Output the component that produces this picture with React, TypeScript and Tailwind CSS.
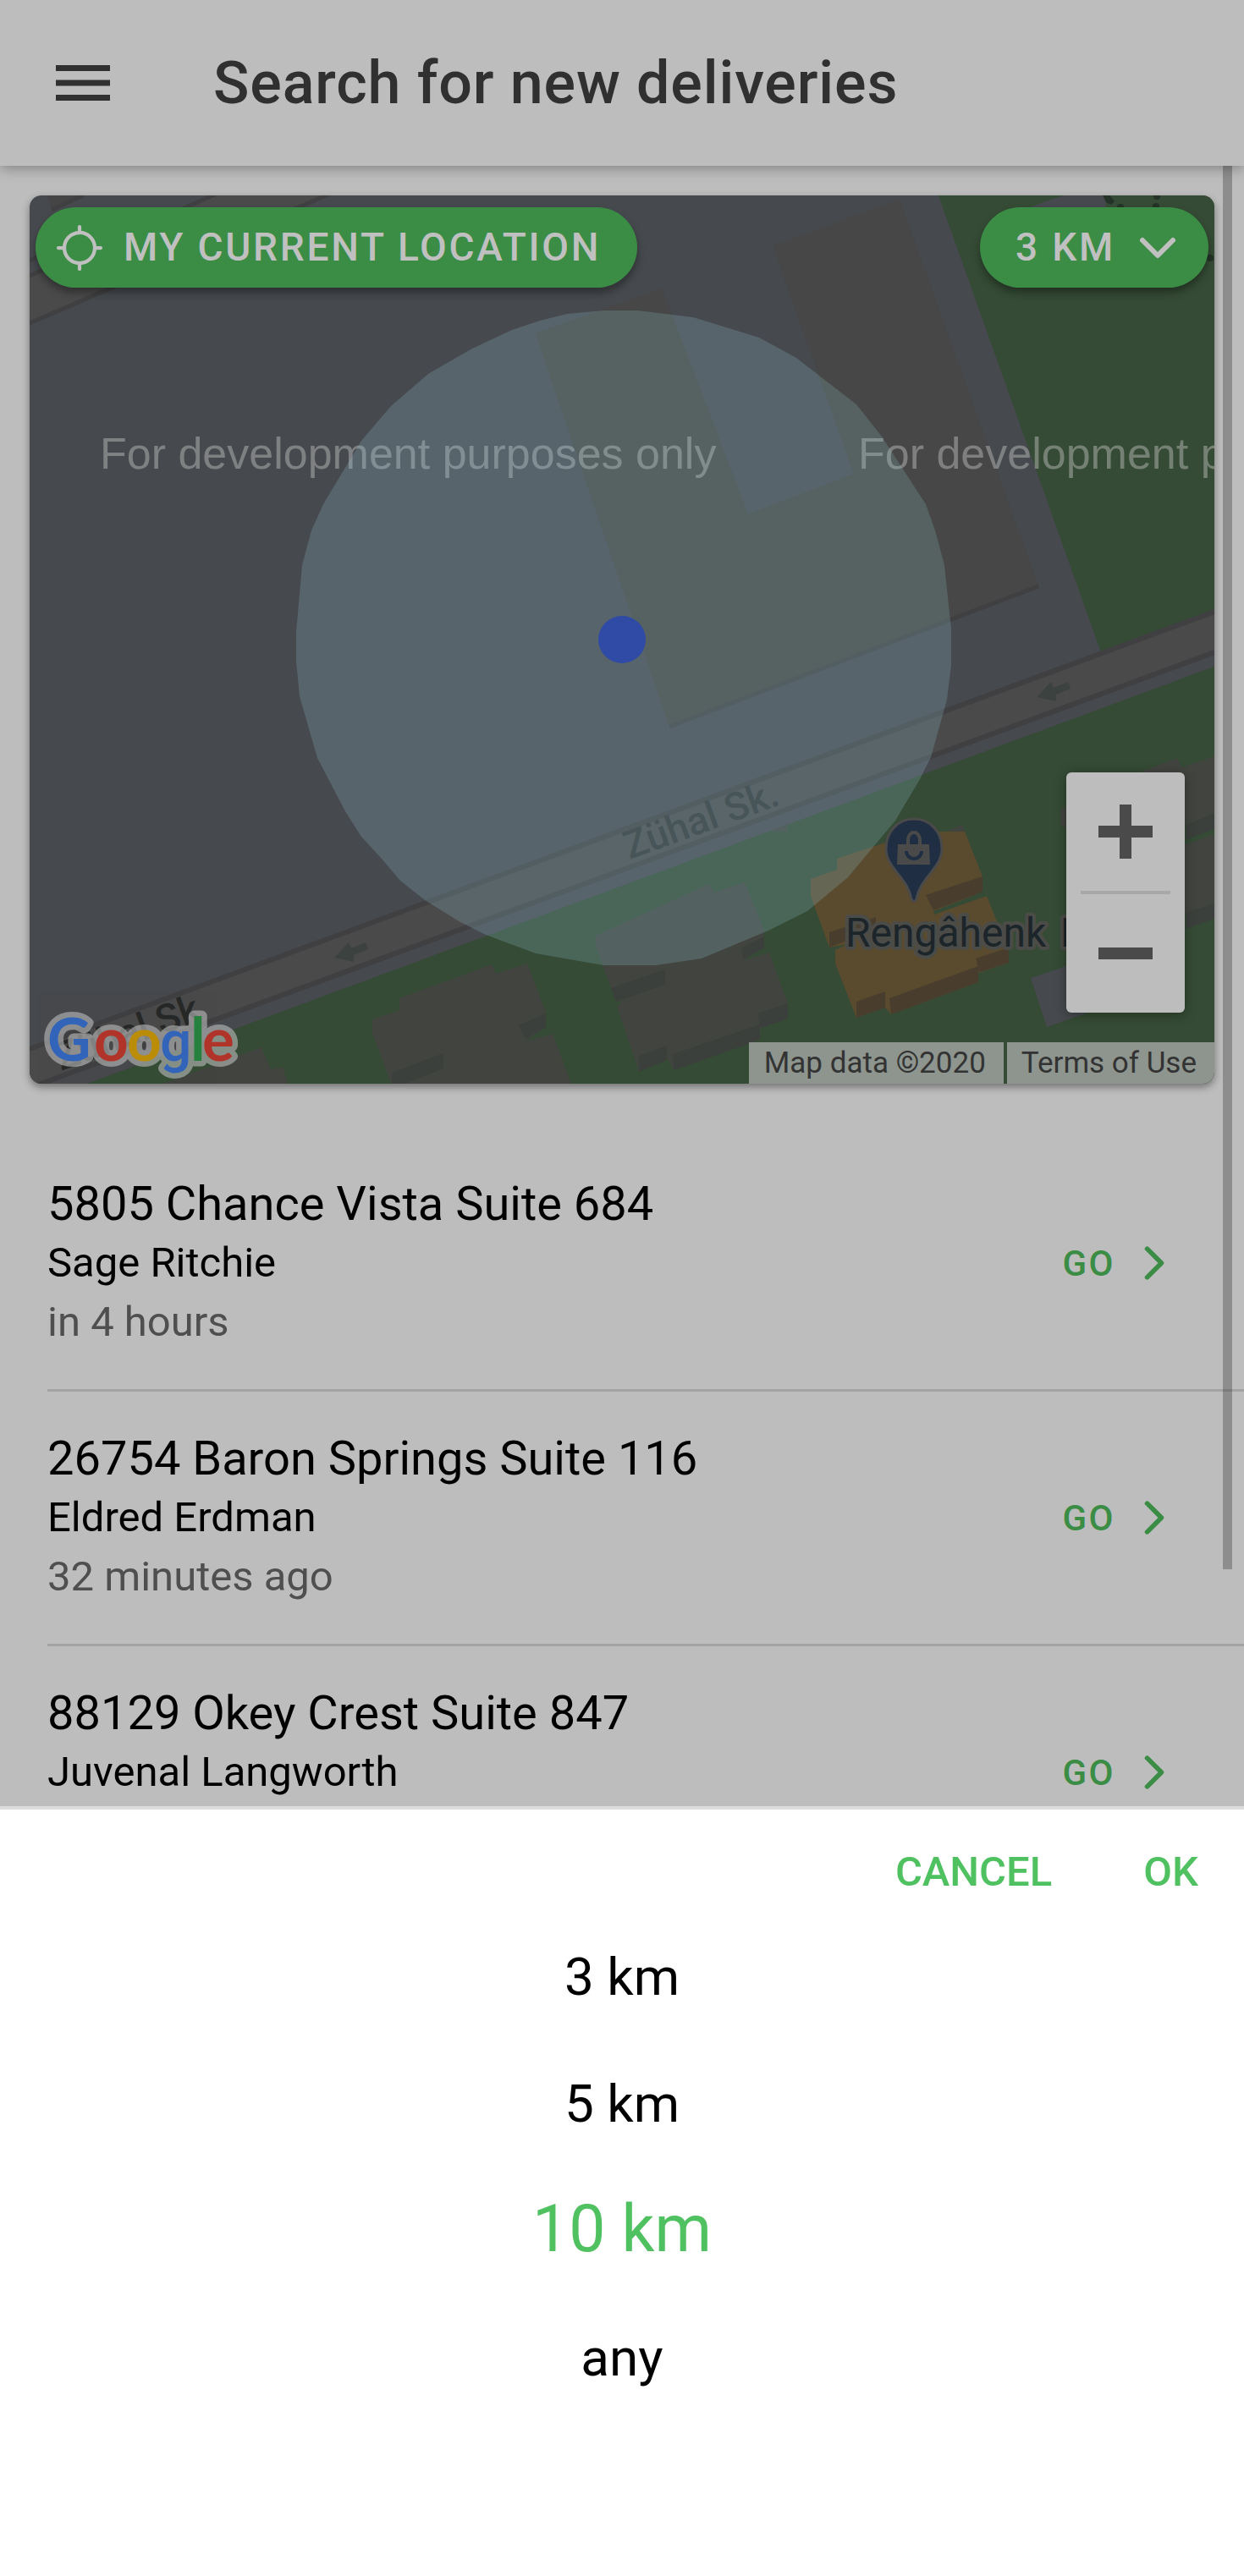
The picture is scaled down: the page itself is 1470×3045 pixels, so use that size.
import React from "react";

const deliveries = [
  { address: "5805 Chance Vista Suite 684", customer: "Sage Ritchie", time: "in 4 hours" },
  { address: "26754 Baron Springs Suite 116", customer: "Eldred Erdman", time: "32 minutes ago" },
  { address: "88129 Okey Crest Suite 847", customer: "Juvenal Langworth", time: "" },
];

const distances = ["3 km", "5 km", "10 km", "any"];

function MenuIcon() {
  return (
    <svg viewBox="0 0 64 42" className="h-[42px] w-16" fill="currentColor" aria-hidden="true">
      <path d="M0 0h64v7H0zM0 17.5h64v7H0zM0 35h64v7H0z" />
    </svg>
  );
}

function LocateIcon() {
  return (
    <svg viewBox="0 0 512 512" className="size-16 shrink-0" fill="none" stroke="currentColor" strokeWidth="34" strokeLinecap="round" strokeLinejoin="round" aria-hidden="true">
      <path d="M256 96V56M256 456v-40M256 112a144 144 0 10144 144 144 144 0 00-144-144zM416 256h40M56 256h40" />
    </svg>
  );
}

function ChevronDown() {
  return (
    <svg viewBox="0 0 512 512" className="size-16 shrink-0" fill="none" stroke="currentColor" strokeWidth="48" strokeLinecap="round" strokeLinejoin="round" aria-hidden="true">
      <path d="M112 184l144 144 144-144" />
    </svg>
  );
}

function ChevronForward() {
  return (
    <svg viewBox="0 0 512 512" className="size-[60px] shrink-0" fill="none" stroke="currentColor" strokeWidth="48" strokeLinecap="round" strokeLinejoin="round" aria-hidden="true">
      <path d="M184 112l144 144-144 144" />
    </svg>
  );
}

const arrow = "395,1132 412,1114 415,1121 432,1114 435,1122 418,1129 418,1137";

const largeBuilding = "M633 394L782 341L884 608L1009 560L913 291L1063 235L1227 692L791 859Z";

const radiusOutline =
  "754,367 819,375 897,399 941,423 1012,478 1042,516 1094,596 1105,627 1116,668 1124,743 1124,786 1119,827 1100,895 1087,921 1058,970 1002,1037 954,1077 908,1100 829,1133 775,1141 713,1141 633,1127 574,1105 544,1090 502,1064 473,1041 450,1014 427,989 408,959 375,896 354,823 350,782 350,747 357,668 368,627 382,596 427,521 462,480 506,442 558,412 605,390 638,379 670,371 713,367";

function LogoLetters({ halo = false }: { halo?: boolean }) {
  return (
    <text
      y="1254"
      fontFamily="Lato, Roboto, sans-serif"
      fontWeight="700"
      fontSize="71"
      stroke={halo ? "#bdbdbd" : "none"}
      strokeWidth="13"
      strokeLinejoin="round"
    >
      <tspan x="56" fill="#3264b9">G</tspan>
      <tspan x="111" fill="#b03429">o</tspan>
      <tspan x="150" fill="#bb8c05">o</tspan>
      <tspan x="189" fill="#3264b9" fontFamily="Roboto, sans-serif" fontWeight="500" fontSize="66">g</tspan>
      <tspan x="225" fill="#27813e">l</tspan>
      <tspan x="239" fill="#b03429">e</tspan>
    </text>
  );
}

function MapDrawing() {
  return (
    <svg viewBox="35 231 1400 1050" className="block h-full w-full" role="img" aria-label="Map of the search area">
      <clipPath id="search-radius">
        <polygon points={radiusOutline} />
      </clipPath>
      <rect x="35" y="231" width="1400" height="1050" fill="#46494d" />

      {/* north-west street and lots */}
      <path d="M56 231H98L61 248Z" fill="#464545" />
      <path d="M35 325L250 231H388L35 381Z" fill="#4a4a4a" />
      <path d="M35 326L256 229M35 382L390 229M61 248L98 231M35 308L60 297" stroke="#404042" strokeWidth="5" fill="none" />

      {/* large building */}
      <path d={largeBuilding} fill="#474747" />
      <path d={largeBuilding} fill="#45453f" clipPath="url(#search-radius)" />
      <path d="M791 859L1227 693" stroke="#404042" strokeWidth="5" />

      {/* parks */}
      <path d="M1109 231H1435V724L1301 771Z" fill="#354b35" />
      <path d="M1258 231H1305L1309 252H1205Q1225 240 1258 231Z" fill="#46494d" />
      <g fill="#243227">
        <path d="M1303 231h8l6 7-4 4-6-3z" />
        <circle cx="1324" cy="245" r="4" />
        <circle cx="1367" cy="232" r="4" />
        <circle cx="1366" cy="244" r="4" />
        <circle cx="1430" cy="305" r="4" />
      </g>
      <path d="M103 1281L1435 788V1281Z" fill="#354b35" />

      {/* main street */}
      <path d="M35 1239L1435 722V770L35 1285Z" fill="#4a4a4a" />
      <path d="M35 1240L1435 723M35 1286L1435 771" stroke="#404042" strokeWidth="6" />
      <polygon points={arrow} fill="#3c423f" />
      <polygon points={arrow} fill="#3c423f" transform="translate(830 -308)" />

      {/* grey buildings */}
      <g fill="#42453f">
        <path d="M581 1140L586 1151L623 1139L645 1196V1214L621 1231L653 1222L675 1281H462L440 1221V1205L472 1194V1180Z" />
        <path d="M192 1281L309 1238L320 1264L334 1261L340 1281Z" />
        <path d="M704 1106L838 1045L844 1055L880 1043L903 1100V1120L879 1135L909 1126L931 1186V1204L898 1216V1229L796 1265L789 1251L755 1267L729 1190L735 1184L727 1182L704 1118Z" />
        <path d="M1344 914L1391 896L1396 907L1435 894V961L1401 976L1300 1000L1253 975V957Z" />
        <path d="M1401 998L1435 986V1068L1401 1080L1350 1080V1010Z" />
        <path d="M1119 982L1137 975L1141 984Z" />
        <path d="M911 983L931 973V983Z" />
      </g>
      <g fill="#3b403d">
        <path d="M613 1212L645 1198V1214L621 1228Z" />
        <path d="M463 1268L524 1245V1263L478 1281H463Z" />
        <path d="M876 1121L903 1107V1120L879 1134Z" />
        <path d="M895 1198L931 1186V1204L899 1215Z" />
        <path d="M722 1168L786 1146V1164L728 1184Z" />
        <path d="M755 1248L788 1236V1253L755 1267Z" />
        <path d="M795 1246L898 1211V1229L796 1265Z" />
        <path d="M1401 976L1435 961V980L1401 993Z" />
        <path d="M1401 1079L1435 1068V1086L1401 1098Z" />
      </g>
      <path d="M1218 1156L1260 1142L1283 1198L1237 1214Z" fill="#46494d" />

      {/* shop building */}
      <path d="M958 1039L989 1028V1015L1046 996L1095 983H1140L1161 1036V1054L1103 1078L1166 1059L1192 1125V1138L1156 1150V1161L1053 1199L1046 1191L1012 1203L987 1139V1123L1002 1116L980 1120L958 1059Z" fill="#5a4b2f" />
      <path d="M1103 1077L1161 1055L1166 1059L1104 1081Z" fill="#354b35" />
      <g fill="#493e2e">
        <path d="M1094 1058L1161 1036V1054L1103 1076Z" />
        <path d="M980 1102L1035 1084V1098L980 1120Z" />
        <path d="M1012 1184L1046 1172V1191L1012 1203Z" />
        <path d="M1051 1180L1156 1142V1161L1053 1199Z" />
        <path d="M1153 1133L1192 1120V1138L1157 1149Z" />
      </g>

      <g fontFamily="'Liberation Sans', Arial, sans-serif" fontSize="52" fill="#bdbdbd" fillOpacity="0.48">
        <text x="118" y="554">For development purposes only</text>
        <text x="1014" y="554">For development purposes only</text>
      </g>
      <g fontFamily="Roboto, sans-serif" fontSize="46" fontWeight="500">
        <text transform="translate(744 1016) rotate(-20)" fill="#303535">Zühal Sk.</text>
        <text transform="translate(72 1266) rotate(-20)" fill="#272929">Zühal Sk</text>
      </g>

      {/* search radius */}
      <polygon fill="#8db8c8" fillOpacity="0.25" points={radiusOutline} />
      <circle cx="735" cy="756" r="28" fill="#2f4ba5" />

      {/* shop marker */}
      <path d="M1080 968C1060 968 1047 984 1047 1003C1047 1027 1073 1037 1077 1063Q1080 1068 1083 1063C1087 1037 1113 1027 1113 1003C1113 984 1100 968 1080 968Z" fill="#1f2e42" stroke="#4a4a4a" strokeWidth="3" />
      <path d="M1061 998H1098L1099 1022H1060Z" fill="#4a4a4a" />
      <path d="M1073 999V993A7 9 0 011087 993V999" fill="none" stroke="#4a4a4a" strokeWidth="4" />
      <path d="M1071 1006A9 9 0 001089 1006" fill="none" stroke="#1f2e42" strokeWidth="4" />
      <g fontFamily="Roboto, sans-serif" fontSize="48" fill="#1c252a" stroke="#4b4b48" strokeWidth="8" strokeLinejoin="round" paintOrder="stroke">
        <text x="999" y="1119">
          Rengâhenk<tspan x="1253">E</tspan>
        </text>
      </g>

      {/* map provider logo */}
      <g opacity="0.6">
        <LogoLetters halo />
      </g>
      <LogoLetters />
    </svg>
  );
}

function MapCard() {
  const pill =
    "absolute top-[14px] flex h-[95px] items-center rounded-full bg-[#3b8d46] text-[46px] font-medium tracking-[0.06em] text-[#c0c0c0] shadow-[0_6px_10px_rgba(0,0,0,0.35)]";
  return (
    <section className="relative m-[35px] aspect-[4/3] shrink-0 rounded-[14px] shadow-[0_4px_10px_rgba(0,0,0,0.4)]">
      <div className="h-full overflow-hidden rounded-[14px]">
        <MapDrawing />
      </div>
      <button type="button" className={`${pill} left-[7px] gap-5 pr-[43px] pl-5`}>
        <LocateIcon />
        MY CURRENT LOCATION
      </button>
      <button type="button" className={`${pill} right-[7px] gap-[18px] pr-7 pl-[42px]`}>
        3 KM
        <ChevronDown />
      </button>
      <div className="absolute right-[35px] bottom-[84px] flex w-[140px] flex-col rounded-md bg-[#bdbdbd] shadow-[0_2px_14px_rgba(0,0,0,0.35)]">
        <button type="button" aria-label="Zoom in" className="flex h-[140px] items-center justify-center">
          <svg viewBox="0 0 64 64" className="size-16" fill="#4a4a4a" aria-hidden="true">
            <path d="M25 0h14v25h25v14H39v25H25V39H0V25h25z" />
          </svg>
        </button>
        <div className="mx-[17px] h-1 bg-[#a8a8a8]" />
        <button type="button" aria-label="Zoom out" className="flex h-[140px] items-center justify-center">
          <svg viewBox="0 0 64 14" className="h-[14px] w-16" fill="#4a4a4a" aria-hidden="true">
            <path d="M0 0h64v14H0z" />
          </svg>
        </button>
      </div>
      <div className="absolute right-0 bottom-0 flex gap-1 overflow-hidden rounded-br-[14px] text-[35px] leading-[49px] text-[#333333]">
        <span className="bg-[#8d958e] pr-[21px] pl-[18px]">Map data ©2020</span>
        <a href="#terms" className="bg-[#8d958e] pr-[21px] pl-[17px]">Terms of Use</a>
      </div>
    </section>
  );
}

export default function App() {
  return (
    <div className="flex h-screen flex-col overflow-hidden bg-[#bdbdbd] font-[Roboto,sans-serif] text-black">
      <header className="relative z-10 flex h-[196px] shrink-0 items-center gap-[122px] bg-[#bdbdbd] pl-[66px] text-[#303030] shadow-[0_2px_16px_rgba(0,0,0,0.35)]">
        <button type="button" aria-label="Open menu">
          <MenuIcon />
        </button>
        <h1 className="text-[70px] leading-[84px] font-medium tracking-[0.0125em]">Search for new deliveries</h1>
      </header>

      <main className="relative flex min-h-0 flex-1 flex-col overflow-hidden">
        <MapCard />
        <ul className="mt-7 shrink-0">
          {deliveries.map((d) => (
            <li key={d.address} className="ml-14 flex h-[301px] items-center border-b-[3px] border-[#a3a3a3] pr-[76px]">
              <div className="h-[210px] flex-1 leading-[70px]">
                <h2 className="text-[56px]">{d.address}</h2>
                <h3 className="text-[49px]">{d.customer}</h3>
                <p className="text-[49px] text-[#4f4f4f]">{d.time}</p>
              </div>
              <button type="button" className="flex items-center gap-4 text-[42px] font-medium tracking-[0.06em] text-[#3b8d46]">
                GO
                <ChevronForward />
              </button>
            </li>
          ))}
        </ul>
        <div className="absolute top-0 right-[14px] h-[1659px] w-[11px] bg-black/25" />
      </main>

      <section aria-label="Distance" className="flex h-[910px] shrink-0 flex-col border-t-4 border-[#dcdcdc] bg-white">
        <div className="flex h-[148px] shrink-0 items-center justify-end gap-2 pr-1 text-[49px] font-medium text-[#4fc160]">
          <button type="button" className="px-[50px]">CANCEL</button>
          <button type="button" className="px-[50px]">OK</button>
        </div>
        <div className="mt-[-26px] flex flex-col items-center">
          {distances.map((label) => (
            <button
              key={label}
              type="button"
              aria-pressed={label === "10 km"}
              className={label === "10 km" ? "h-[150px] text-[77px] text-[#4fc160]" : "h-[150px] text-[62px]"}
            >
              {label}
            </button>
          ))}
        </div>
      </section>
    </div>
  );
}
